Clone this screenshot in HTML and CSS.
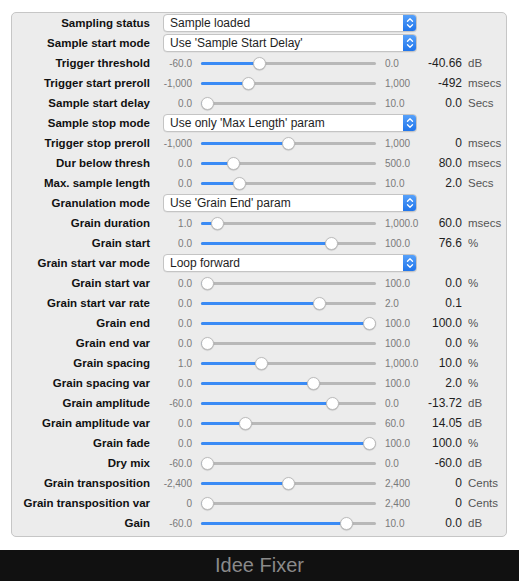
FILE: index.html
```html
<!DOCTYPE html>
<html>
<head>
<meta charset="utf-8">
<link rel="stylesheet" href="styles.css">
</head>
<body>
<div class="page">
  <div class="panel">
    <div class="row"><div class="label">Sampling status</div><div class="select"><span class="sel-text">Sample loaded</span><span class="cap"><svg width="14" height="18" viewBox="0 0 14 18"><path d="M4.5 7.2 L7 4.8 L9.5 7.2 M4.5 10.8 L7 13.2 L9.5 10.8" fill="none" stroke="#fff" stroke-width="1.3" stroke-linecap="round" stroke-linejoin="round"/></svg></span></div></div>
    <div class="row"><div class="label">Sample start mode</div><div class="select"><span class="sel-text">Use 'Sample Start Delay'</span><span class="cap"><svg width="14" height="18" viewBox="0 0 14 18"><path d="M4.5 7.2 L7 4.8 L9.5 7.2 M4.5 10.8 L7 13.2 L9.5 10.8" fill="none" stroke="#fff" stroke-width="1.3" stroke-linecap="round" stroke-linejoin="round"/></svg></span></div></div>
    <div class="row"><div class="label">Trigger threshold</div><div class="min">-60.0</div><div class="slider" style="--v:0.3223"><div class="track"></div><div class="fill"></div><div class="thumb"></div></div><div class="max">0.0</div><div class="value">-40.66</div><div class="unit">dB</div></div>
    <div class="row"><div class="label">Trigger start preroll</div><div class="min">-1,000</div><div class="slider" style="--v:0.254"><div class="track"></div><div class="fill"></div><div class="thumb"></div></div><div class="max">1,000</div><div class="value">-492</div><div class="unit">msecs</div></div>
    <div class="row"><div class="label">Sample start delay</div><div class="min">0.0</div><div class="slider" style="--v:0"><div class="track"></div><div class="fill"></div><div class="thumb"></div></div><div class="max">10.0</div><div class="value">0.0</div><div class="unit">Secs</div></div>
    <div class="row"><div class="label">Sample stop mode</div><div class="select"><span class="sel-text">Use only 'Max Length' param</span><span class="cap"><svg width="14" height="18" viewBox="0 0 14 18"><path d="M4.5 7.2 L7 4.8 L9.5 7.2 M4.5 10.8 L7 13.2 L9.5 10.8" fill="none" stroke="#fff" stroke-width="1.3" stroke-linecap="round" stroke-linejoin="round"/></svg></span></div></div>
    <div class="row"><div class="label">Trigger stop preroll</div><div class="min">-1,000</div><div class="slider" style="--v:0.5"><div class="track"></div><div class="fill"></div><div class="thumb"></div></div><div class="max">1,000</div><div class="value">0</div><div class="unit">msecs</div></div>
    <div class="row"><div class="label">Dur below thresh</div><div class="min">0.0</div><div class="slider" style="--v:0.16"><div class="track"></div><div class="fill"></div><div class="thumb"></div></div><div class="max">500.0</div><div class="value">80.0</div><div class="unit">msecs</div></div>
    <div class="row"><div class="label">Max. sample length</div><div class="min">0.0</div><div class="slider" style="--v:0.2"><div class="track"></div><div class="fill"></div><div class="thumb"></div></div><div class="max">10.0</div><div class="value">2.0</div><div class="unit">Secs</div></div>
    <div class="row"><div class="label">Granulation mode</div><div class="select"><span class="sel-text">Use 'Grain End' param</span><span class="cap"><svg width="14" height="18" viewBox="0 0 14 18"><path d="M4.5 7.2 L7 4.8 L9.5 7.2 M4.5 10.8 L7 13.2 L9.5 10.8" fill="none" stroke="#fff" stroke-width="1.3" stroke-linecap="round" stroke-linejoin="round"/></svg></span></div></div>
    <div class="row"><div class="label">Grain duration</div><div class="min">1.0</div><div class="slider" style="--v:0.059"><div class="track"></div><div class="fill"></div><div class="thumb"></div></div><div class="max">1,000.0</div><div class="value">60.0</div><div class="unit">msecs</div></div>
    <div class="row"><div class="label">Grain start</div><div class="min">0.0</div><div class="slider" style="--v:0.766"><div class="track"></div><div class="fill"></div><div class="thumb"></div></div><div class="max">100.0</div><div class="value">76.6</div><div class="unit">%</div></div>
    <div class="row"><div class="label">Grain start var mode</div><div class="select"><span class="sel-text">Loop forward</span><span class="cap"><svg width="14" height="18" viewBox="0 0 14 18"><path d="M4.5 7.2 L7 4.8 L9.5 7.2 M4.5 10.8 L7 13.2 L9.5 10.8" fill="none" stroke="#fff" stroke-width="1.3" stroke-linecap="round" stroke-linejoin="round"/></svg></span></div></div>
    <div class="row"><div class="label">Grain start var</div><div class="min">0.0</div><div class="slider" style="--v:0"><div class="track"></div><div class="fill"></div><div class="thumb"></div></div><div class="max">100.0</div><div class="value">0.0</div><div class="unit">%</div></div>
    <div class="row"><div class="label">Grain start var rate</div><div class="min">0.0</div><div class="slider" style="--v:0.69"><div class="track"></div><div class="fill"></div><div class="thumb"></div></div><div class="max">2.0</div><div class="value">0.1</div><div class="unit"></div></div>
    <div class="row"><div class="label">Grain end</div><div class="min">0.0</div><div class="slider" style="--v:1"><div class="track"></div><div class="fill"></div><div class="thumb"></div></div><div class="max">100.0</div><div class="value">100.0</div><div class="unit">%</div></div>
    <div class="row"><div class="label">Grain end var</div><div class="min">0.0</div><div class="slider" style="--v:0"><div class="track"></div><div class="fill"></div><div class="thumb"></div></div><div class="max">100.0</div><div class="value">0.0</div><div class="unit">%</div></div>
    <div class="row"><div class="label">Grain spacing</div><div class="min">1.0</div><div class="slider" style="--v:0.333"><div class="track"></div><div class="fill"></div><div class="thumb"></div></div><div class="max">1,000.0</div><div class="value">10.0</div><div class="unit">%</div></div>
    <div class="row"><div class="label">Grain spacing var</div><div class="min">0.0</div><div class="slider" style="--v:0.656"><div class="track"></div><div class="fill"></div><div class="thumb"></div></div><div class="max">100.0</div><div class="value">2.0</div><div class="unit">%</div></div>
    <div class="row"><div class="label">Grain amplitude</div><div class="min">-60.0</div><div class="slider" style="--v:0.771"><div class="track"></div><div class="fill"></div><div class="thumb"></div></div><div class="max">0.0</div><div class="value">-13.72</div><div class="unit">dB</div></div>
    <div class="row"><div class="label">Grain amplitude var</div><div class="min">0.0</div><div class="slider" style="--v:0.234"><div class="track"></div><div class="fill"></div><div class="thumb"></div></div><div class="max">60.0</div><div class="value">14.05</div><div class="unit">dB</div></div>
    <div class="row"><div class="label">Grain fade</div><div class="min">0.0</div><div class="slider" style="--v:1"><div class="track"></div><div class="fill"></div><div class="thumb"></div></div><div class="max">100.0</div><div class="value">100.0</div><div class="unit">%</div></div>
    <div class="row"><div class="label">Dry mix</div><div class="min">-60.0</div><div class="slider" style="--v:0"><div class="track"></div><div class="fill"></div><div class="thumb"></div></div><div class="max">0.0</div><div class="value">-60.0</div><div class="unit">dB</div></div>
    <div class="row"><div class="label">Grain transposition</div><div class="min">-2,400</div><div class="slider" style="--v:0.5"><div class="track"></div><div class="fill"></div><div class="thumb"></div></div><div class="max">2,400</div><div class="value">0</div><div class="unit">Cents</div></div>
    <div class="row"><div class="label">Grain transposition var</div><div class="min">0</div><div class="slider" style="--v:0"><div class="track"></div><div class="fill"></div><div class="thumb"></div></div><div class="max">2,400</div><div class="value">0</div><div class="unit">Cents</div></div>
    <div class="row"><div class="label">Gain</div><div class="min">-60.0</div><div class="slider" style="--v:0.857"><div class="track"></div><div class="fill"></div><div class="thumb"></div></div><div class="max">10.0</div><div class="value">0.0</div><div class="unit">dB</div></div>
  </div>
</div>
<div class="footer">Idee Fixer</div>
</body>
</html>
```
FILE: styles.css
```css
html, body {
  margin: 0;
  padding: 0;
  background: #ffffff;
  font-family: "Liberation Sans", Arial, sans-serif;
}
.page {
  padding: 12px 12px 0 11px;
}
.panel {
  background: #ececec;
  border: 1px solid #c6c6c6;
  border-radius: 5px;
  padding: 0 0 3px 0;
}
.row {
  display: flex;
  align-items: center;
  height: 20px;
}
.label {
  width: 138px;
  flex: none;
  text-align: right;
  font-weight: bold;
  font-size: 11.5px;
  color: #111;
  white-space: nowrap;
}
.min {
  width: 42px;
  flex: none;
  text-align: right;
  font-size: 10px;
  color: #7a7a7a;
}
.max {
  width: 40px;
  flex: none;
  margin-left: 9px;
  font-size: 10px;
  color: #7a7a7a;
  white-space: nowrap;
}
.value {
  width: 37px;
  flex: none;
  text-align: right;
  font-size: 12px;
  color: #1e1e1e;
}
.unit {
  margin-left: 6px;
  font-size: 11.5px;
  color: #555;
}
.slider {
  position: relative;
  width: 175px;
  height: 13px;
  margin-left: 9px;
  flex: none;
}
.track {
  position: absolute;
  left: 0;
  right: 0;
  top: 5px;
  height: 3px;
  border-radius: 2px;
  background: #b8b8b8;
}
.fill {
  position: absolute;
  left: 0;
  top: 5px;
  height: 3px;
  border-radius: 2px;
  background: #3a8bf5;
  width: calc(6px + var(--v) * (100% - 12px));
}
.thumb {
  position: absolute;
  top: 0;
  left: calc(var(--v) * (100% - 13px));
  width: 13px;
  height: 13px;
  box-sizing: border-box;
  border-radius: 50%;
  background: #ffffff;
  border: 1px solid #bdbdbd;
  box-shadow: 0 0.5px 1px rgba(0, 0, 0, 0.25);
}
.select {
  margin-left: 13px;
  width: 254px;
  height: 18px;
  box-sizing: border-box;
  display: flex;
  align-items: center;
  background: #ffffff;
  border: 1px solid #c4c4c4;
  border-radius: 4px;
  box-shadow: 0 0.5px 0.5px rgba(0, 0, 0, 0.08);
  overflow: hidden;
}
.sel-text {
  flex: 1;
  padding-left: 6px;
  font-size: 12px;
  color: #1e1e1e;
  white-space: nowrap;
}
.cap {
  width: 14px;
  height: 18px;
  flex: none;
  display: flex;
  background: linear-gradient(#5aa3fa, #1d72ea);
  margin-right: -1px;
}
.footer {
  margin-top: 13px;
  height: 31px;
  background: #111111;
  color: #8a8a8a;
  font-size: 20px;
  text-align: center;
  line-height: 30px;
}
```
